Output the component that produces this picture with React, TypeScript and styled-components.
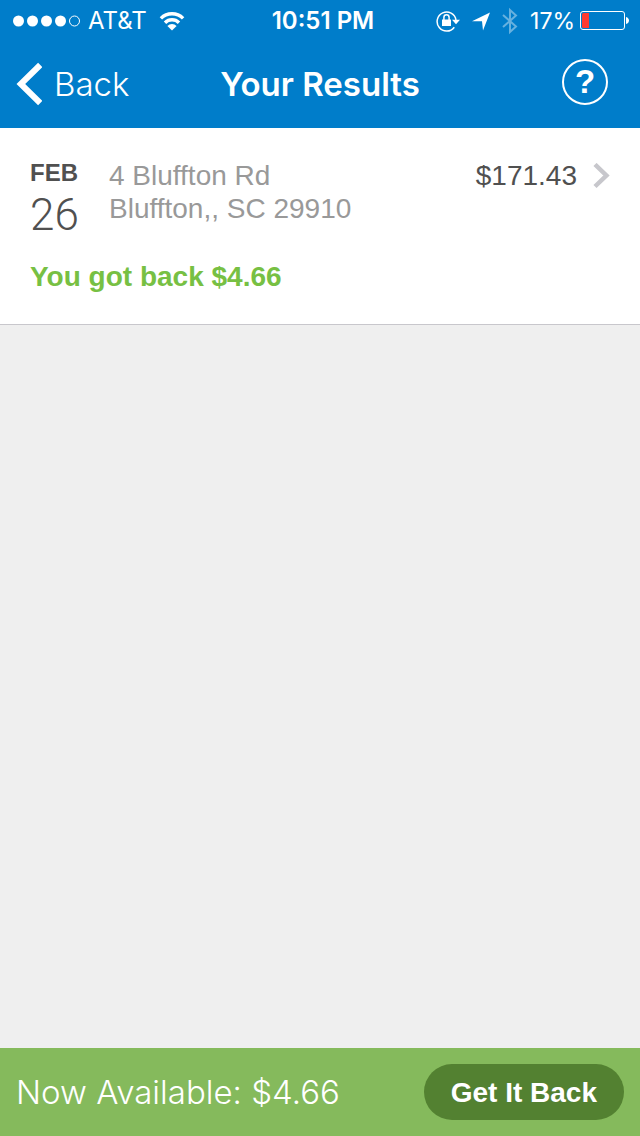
import React from "react";
import styled, { createGlobalStyle } from "styled-components";

const system = '"Inter", "Liberation Sans", sans-serif';
const helvetica = '"Liberation Sans", Arial, sans-serif';

const GlobalStyle = createGlobalStyle`
  *, *::before, *::after { box-sizing: border-box; }
  body { margin: 0; background: #efefef; font-family: ${helvetica}; }
  button { font: inherit; border: 0; cursor: pointer; }
  svg { display: block; flex: none; }
`;

const Screen = styled.div`
  min-height: 100vh;
  display: flex;
  flex-direction: column;
`;

const Top = styled.header`
  background: #007dca;
  color: #fff;
  font-family: ${system};
`;

const StatusBar = styled.div`
  display: grid;
  grid-template-columns: 1fr auto 1fr;
  align-items: center;
  height: 40px;
  padding: 2px 11px 0 13px;
  font-size: 24px;
  line-height: 38px;
`;

const StatusGroup = styled.div<{ $end?: boolean }>`
  display: flex;
  align-items: center;
  justify-content: ${(p) => (p.$end ? "flex-end" : "flex-start")};
  white-space: nowrap;
`;

const Carrier = styled.span`
  margin: 0 12px 0 7px;
`;

const Clock = styled.span`
  padding-left: 4px;
  font-weight: 600;
`;

const StatusIcons = styled.span`
  display: flex;
  align-items: center;
  gap: 12px;
  margin-right: 12px;
`;

const Percent = styled.span`
  margin-right: 5px;
  font-size: 23px;
`;

const NavBar = styled.nav`
  display: grid;
  grid-template-columns: 1fr auto 1fr;
  align-items: center;
  height: 88px;
  padding: 0 32px 0 16px;
`;

const BackLink = styled.a`
  display: flex;
  align-items: center;
  gap: 12px;
  justify-self: start;
  color: #fff;
  font-size: 33px;
  font-weight: 300;
  line-height: 40px;
  text-decoration: none;
`;

const Title = styled.h1`
  margin: 0 -8px 0 8px;
  font-size: 33px;
  font-weight: 600;
  line-height: 40px;
`;

const HelpButton = styled.button`
  justify-self: end;
  width: 46px;
  height: 46px;
  margin-bottom: 4px;
  padding: 0;
  border: 2px solid #fff;
  border-radius: 50%;
  background: transparent;
  color: #fff;
  font-family: ${helvetica};
  font-size: 33px;
  font-weight: 700;
  line-height: 42px;
`;

const Results = styled.main`
  flex: 1;
`;

const ResultCard = styled.article`
  padding: 28px 30px;
  background: #fff;
  border-bottom: 1px solid #c8c7cc;
`;

const ResultRow = styled.div`
  display: flex;
  align-items: flex-start;
`;

const DateBlock = styled.time`
  width: 79px;
  color: #505050;
`;

const Month = styled.span`
  display: block;
  font-size: 24px;
  font-weight: 700;
  line-height: 34px;
`;

const Day = styled.span`
  display: block;
  font-family: Roboto, ${helvetica};
  font-size: 44px;
  font-weight: 300;
  line-height: 50px;
`;

const Address = styled.address`
  flex: 1;
  padding-top: 3px;
  color: #999;
  font-size: 28px;
  font-style: normal;
  line-height: 33px;
`;

const AmountLink = styled.a`
  display: flex;
  align-items: center;
  gap: 16px;
  padding-top: 3px;
  color: #505050;
  font-size: 28px;
  line-height: 33px;
  text-decoration: none;
`;

const Refund = styled.p`
  margin: 20px 0 2px;
  color: #77c043;
  font-size: 28px;
  font-weight: 700;
  line-height: 34px;
`;

const BottomBar = styled.footer`
  display: flex;
  align-items: center;
  justify-content: space-between;
  height: 88px;
  padding: 0 16px;
  background: #85ba5c;
  color: #fff;
`;

const Available = styled.span`
  font-family: ${system};
  font-size: 33px;
  font-weight: 300;
  line-height: 40px;
`;

const ClaimButton = styled.button`
  height: 56px;
  padding: 2px 27px 0;
  border-radius: 28px;
  background: #538131;
  color: #fff;
  font-size: 28px;
  font-weight: 700;
  white-space: nowrap;
`;

const Signal = () => (
  <svg width="68" height="12" viewBox="0 0 68 12" role="img" aria-label="Signal 4 of 5">
    {[6, 20, 34, 48].map((x) => (
      <circle key={x} cx={x - 0.5} cy="6" r="5.5" fill="#fff" />
    ))}
    <circle cx="61.5" cy="6" r="5" fill="none" stroke="#fff" />
  </svg>
);

const Wifi = () => (
  <svg width="26" height="20" viewBox="0 0 26 20" fill="none" stroke="#fff" aria-hidden="true">
    <path d="M1.9 7.4a15.7 15.7 0 0 1 22.2 0" strokeWidth="3.4" />
    <path d="M6 11.7a9.9 9.9 0 0 1 14 0" strokeWidth="3.4" />
    <path d="M13 19.6l-4.6-4.6a6.5 6.5 0 0 1 9.2 0z" fill="#fff" stroke="none" />
  </svg>
);

const RotationLock = () => (
  <svg width="24" height="22" viewBox="0 0 24 22" fill="none" aria-hidden="true">
    <path d="M18.3 17.2A9.5 9.5 0 1 1 20 10" stroke="#fff" strokeWidth="1.5" />
    <path d="M16 9.8h8l-4 4.4z" fill="#fff" />
    <path d="M6 9.5h9v6.5H6z" fill="#fff" />
    <path d="M7.9 10V7.4a2.6 2.6 0 0 1 5.2 0V10" stroke="#fff" strokeWidth="1.5" />
  </svg>
);

const Location = () => (
  <svg width="18" height="19" viewBox="0 0 18 19" aria-hidden="true">
    <path d="M18 .5L11 18.5l-1-9.3H0z" fill="#fff" />
  </svg>
);

const Bluetooth = () => (
  <svg width="16" height="28" viewBox="0 0 16 28" fill="none" aria-hidden="true">
    <path d="M1 8l13 11.5L8 25V3l6 5.5L1 20" stroke="#66b1df" strokeWidth="2" />
  </svg>
);

const Battery = () => (
  <svg width="49" height="20" viewBox="0 0 49 20" fill="none" aria-hidden="true">
    <rect x=".5" y=".5" width="44" height="18" rx="2.5" stroke="#fff" />
    <path d="M2 3.5A1.5 1.5 0 0 1 3.5 2H9v15H3.5A1.5 1.5 0 0 1 2 15.5z" fill="#ff3b30" />
    <path d="M46 6c4 1 4 6 0 7z" fill="#fff" />
  </svg>
);

const BackChevron = () => (
  <svg width="26" height="44" viewBox="0 0 26 44" fill="none" aria-hidden="true">
    <path d="M24.2 3L4.8 22l19.4 19" stroke="#fff" strokeWidth="6" />
  </svg>
);

const Disclosure = () => (
  <svg width="17" height="26" viewBox="0 0 17 26" fill="none" aria-hidden="true">
    <path d="M2 1.5L13.4 12.5 2 23.5" stroke="#c7c7cc" strokeWidth="4.5" />
  </svg>
);

export default function App() {
  return (
    <Screen>
      <GlobalStyle />
      <Top>
        <StatusBar>
          <StatusGroup>
            <Signal />
            <Carrier>AT&amp;T</Carrier>
            <Wifi />
          </StatusGroup>
          <Clock>10:51 PM</Clock>
          <StatusGroup $end>
            <StatusIcons>
              <RotationLock />
              <Location />
              <Bluetooth />
            </StatusIcons>
            <Percent>17%</Percent>
            <Battery />
          </StatusGroup>
        </StatusBar>
        <NavBar>
          <BackLink href="#back">
            <BackChevron />
            Back
          </BackLink>
          <Title>Your Results</Title>
          <HelpButton aria-label="Help">?</HelpButton>
        </NavBar>
      </Top>
      <Results>
        <ResultCard>
          <ResultRow>
            <DateBlock dateTime="02-26">
              <Month>FEB</Month>
              <Day>26</Day>
            </DateBlock>
            <Address>
              4 Bluffton Rd
              <br />
              Bluffton,, SC 29910
            </Address>
            <AmountLink href="#details">
              $171.43
              <Disclosure />
            </AmountLink>
          </ResultRow>
          <Refund>You got back $4.66</Refund>
        </ResultCard>
      </Results>
      <BottomBar>
        <Available>Now Available: $4.66</Available>
        <ClaimButton>Get It Back</ClaimButton>
      </BottomBar>
    </Screen>
  );
}
